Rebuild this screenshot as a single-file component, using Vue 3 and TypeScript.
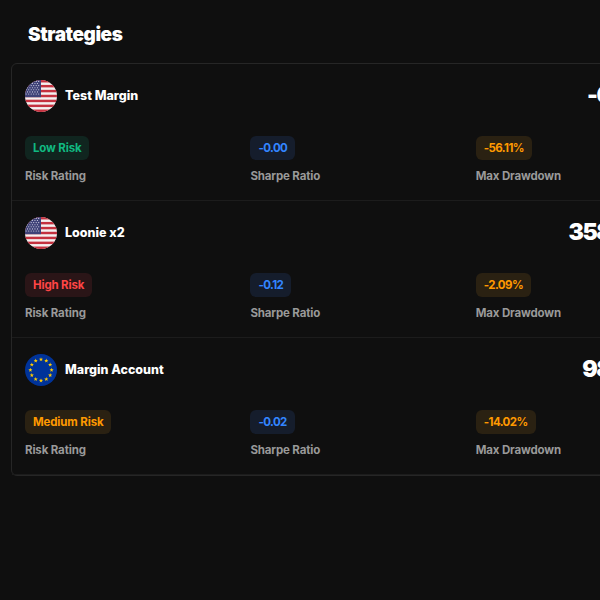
<script setup lang="ts">
interface Strategy {
  name: string
  flag: 'us' | 'eu'
  value: string
  risk: string
  riskTone: string
  sharpe: string
  drawdown: string
}

const strategies: Strategy[] = [
  { name: 'Test Margin', flag: 'us', value: '-6.40%', risk: 'Low Risk', riskTone: 'green', sharpe: '-0.00', drawdown: '-56.11%' },
  { name: 'Loonie x2', flag: 'us', value: '358.40%', risk: 'High Risk', riskTone: 'red', sharpe: '-0.12', drawdown: '-2.09%' },
  { name: 'Margin Account', flag: 'eu', value: '98.40%', risk: 'Medium Risk', riskTone: 'orange', sharpe: '-0.02', drawdown: '-14.02%' },
]

const stripes = Array.from({ length: 7 }, (_, i) => (i * 2 * 32) / 13)
const usStars: [number, number][] = []
for (let r = 0; r < 7; r++) {
  for (let c = 0; c < (r % 2 ? 5 : 6); c++) {
    usStars.push([1.2 + c * 2.5 + (r % 2 ? 1.25 : 0), 1.4 + r * 2.1])
  }
}

function starPoints(cx: number, cy: number, r: number) {
  const pts: string[] = []
  for (let i = 0; i < 10; i++) {
    const rad = i % 2 ? r * 0.42 : r
    const a = (Math.PI * i) / 5 - Math.PI / 2
    pts.push(`${(cx + rad * Math.cos(a)).toFixed(2)},${(cy + rad * Math.sin(a)).toFixed(2)}`)
  }
  return pts.join(' ')
}

const euStars = Array.from({ length: 12 }, (_, i) => {
  const a = (Math.PI * i) / 6
  return starPoints(16 + 10.6 * Math.sin(a), 16 - 10.6 * Math.cos(a), 2.2)
})
</script>

<template>
  <div class="page">
    <h1 class="title">Strategies</h1>
    <div class="card">
      <div v-for="s in strategies" :key="s.name" class="row">
        <div class="row-head">
          <div class="name-wrap">
            <svg class="flag" viewBox="0 0 32 32" width="32" height="32">
              <template v-if="s.flag === 'us'">
                <rect width="32" height="32" fill="#f4f1f1" />
                <rect v-for="y in stripes" :key="y" x="0" :y="y" width="32" :height="32 / 13" fill="#c4313f" />
                <rect width="16" height="17.2" fill="#3f4278" />
                <circle v-for="p in usStars" :key="p.join()" :cx="p[0]" :cy="p[1]" r="0.55" fill="#d8d8e8" />
              </template>
              <template v-else>
                <rect width="32" height="32" fill="#003399" />
                <polygon v-for="p in euStars" :key="p" :points="p" fill="#ffcc00" />
              </template>
            </svg>
            <span class="name">{{ s.name }}</span>
          </div>
          <span class="value">{{ s.value }}</span>
        </div>
        <div class="stats">
          <div class="stat">
            <span class="badge" :class="s.riskTone">{{ s.risk }}</span>
            <span class="label">Risk Rating</span>
          </div>
          <div class="stat">
            <span class="badge num blue">{{ s.sharpe }}</span>
            <span class="label">Sharpe Ratio</span>
          </div>
          <div class="stat">
            <span class="badge num orange">{{ s.drawdown }}</span>
            <span class="label">Max Drawdown</span>
          </div>
        </div>
      </div>
    </div>
  </div>
</template>

<style>
html,
body {
  margin: 0;
  background: #0f0f0f;
  overflow: hidden;
}
</style>

<style scoped>
.page {
  width: 600px;
  height: 600px;
  overflow: hidden;
  background: #0f0f0f;
  padding: 22px 0 0 11px;
  box-sizing: border-box;
  font-family: Inter, 'Liberation Sans', sans-serif;
  color: #fff;
}

.title {
  margin: 0 0 16px 17px;
  font-size: 19px;
  line-height: 25px;
  font-weight: 900;
  letter-spacing: -0.45px;
}

.card {
  width: 704px;
  border: 1px solid #262626;
  border-radius: 6px;
}

.row {
  padding: 16px 13px;
  border-bottom: 1px solid #1c1c1c;
}

.row-head {
  display: flex;
  align-items: center;
  justify-content: space-between;
  height: 32px;
  padding-right: 34px;
}

.name-wrap {
  display: flex;
  align-items: center;
  gap: 8px;
}

.flag {
  display: block;
  border-radius: 50%;
}

.name {
  font-size: 12.5px;
  font-weight: 800;
  margin-top: -2px;
}

.value {
  font-size: 23px;
  font-weight: 900;
  letter-spacing: -1.5px;
  margin-top: -2px;
}

.stats {
  display: grid;
  grid-template-columns: repeat(3, 225.4px);
  margin-top: 24px;
}

.stat {
  display: flex;
  flex-direction: column;
  align-items: flex-start;
  gap: 8px;
}

.badge {
  height: 24px;
  line-height: 24px;
  padding: 0 8px;
  border-radius: 6px;
  font-size: 11.5px;
  font-weight: 700;
  letter-spacing: -0.15px;
}

.num {
  letter-spacing: -0.6px;
}

.green {
  color: #10b981;
  background: #10251f;
}

.red {
  color: #ff4545;
  background: #2a1517;
}

.orange {
  color: #ff9900;
  background: #2a2112;
}

.blue {
  color: #3385ff;
  background: #151d2c;
}

.label {
  font-size: 11.5px;
  line-height: 16px;
  font-weight: 700;
  letter-spacing: -0.15px;
  color: #999;
}
</style>
